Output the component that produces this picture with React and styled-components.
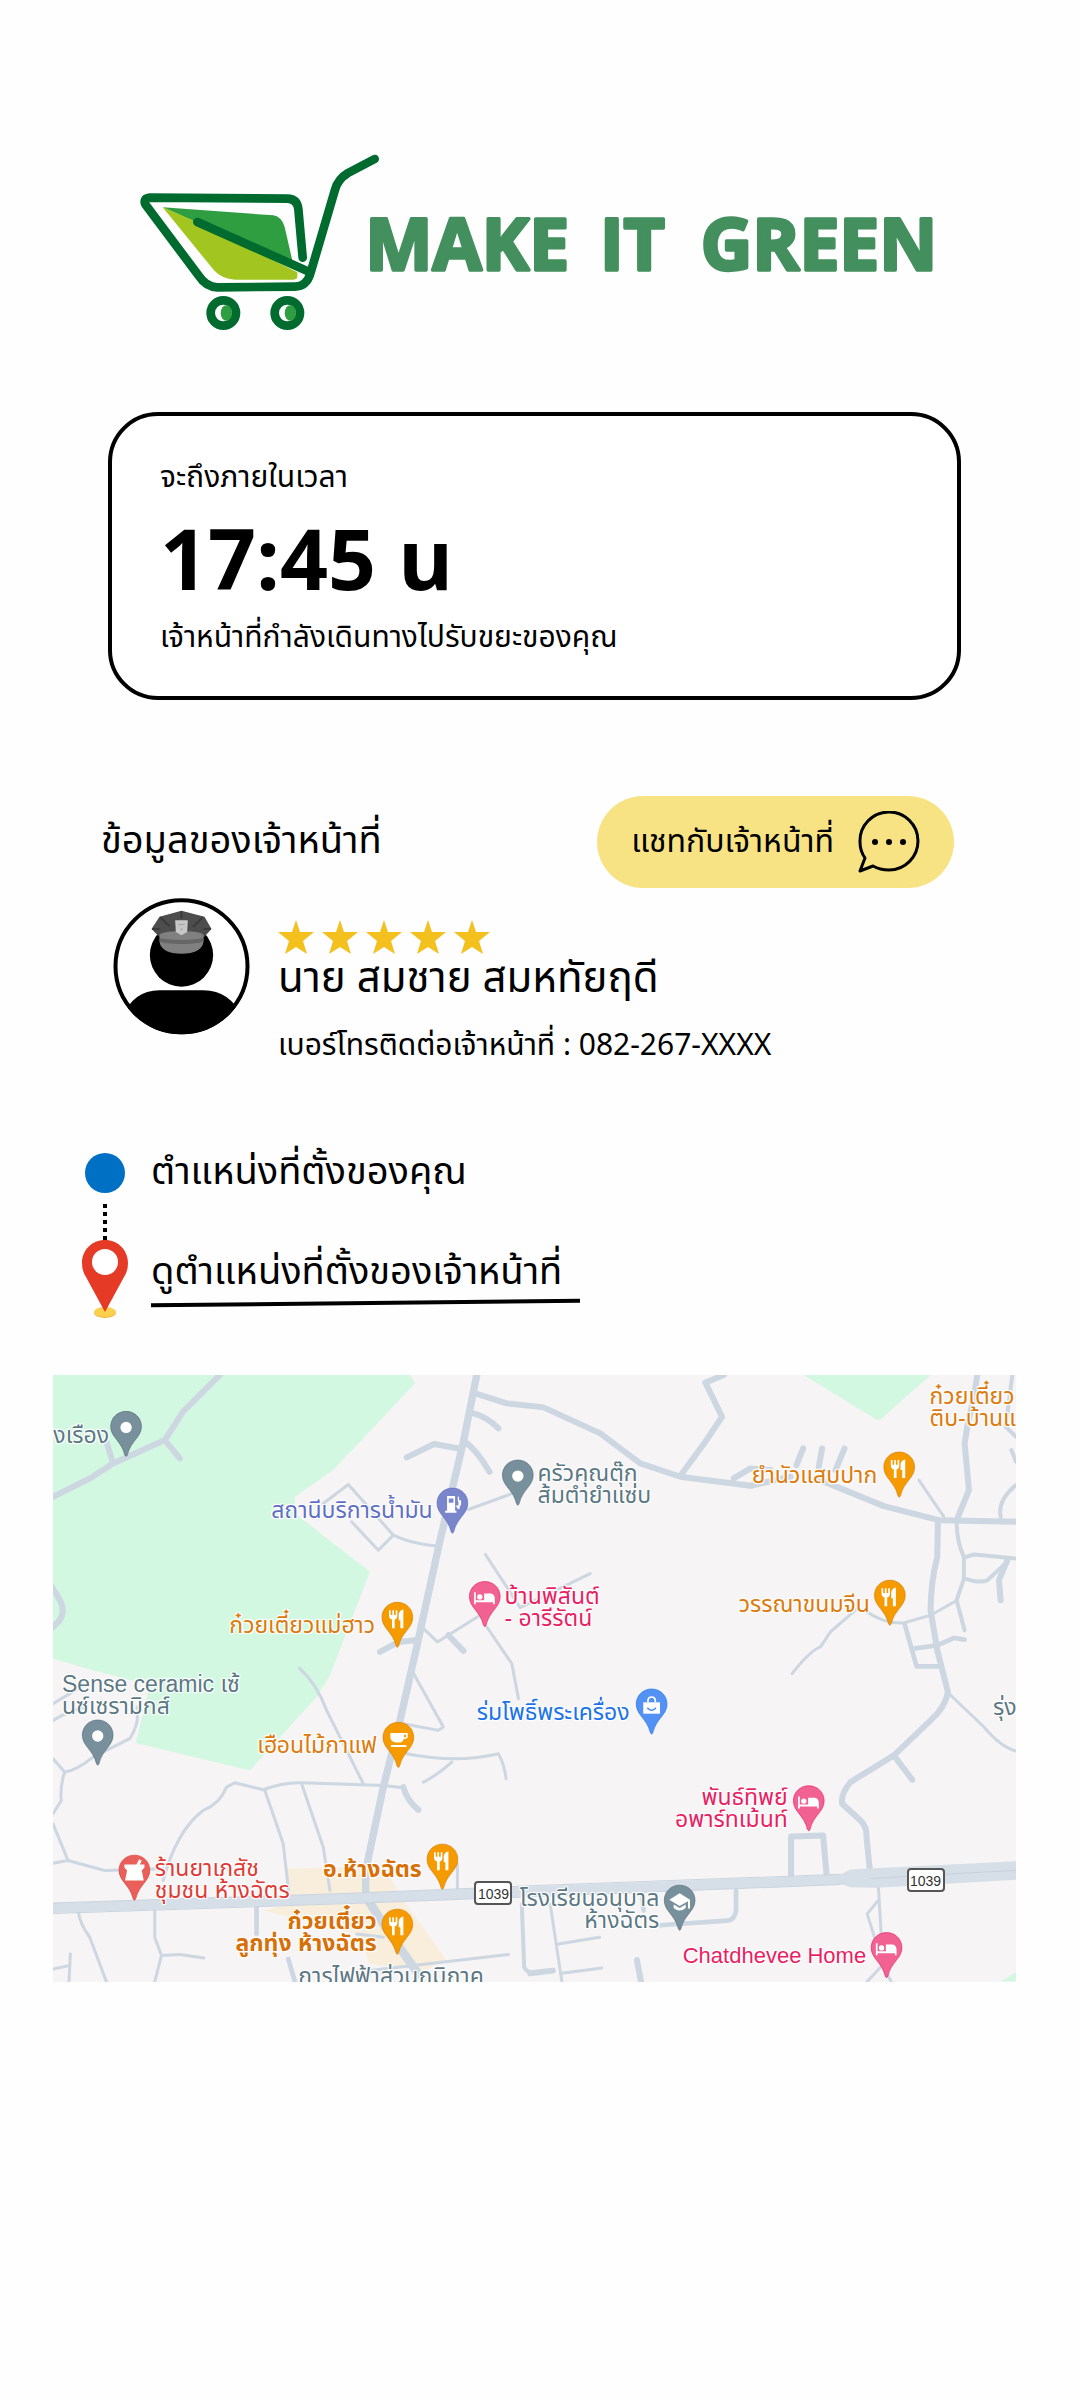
import React from "react";
import styled, { createGlobalStyle } from "styled-components";

const thai = `"Noto Sans Thai", "Open Sans", "Noto Sans", sans-serif`;

const GlobalStyle = createGlobalStyle`
  *, *::before, *::after { box-sizing: border-box; }
  body {
    margin: 0;
    background: #fefefe;
    color: #000;
    font-family: ${thai};
  }
  h1, h2, p, ul, ol { margin: 0; padding: 0; font-weight: 400; }
  ul, ol { list-style: none; }
`;

const Page = styled.main`
  display: flex;
  flex-direction: column;
  padding: 153px 64px 96px 53px;
`;

const Brand = styled.h1`
  display: flex;
  padding: 0 76px 0 87px;

  svg { display: block; width: 100%; max-width: 800px; height: auto; }
`;

const ArrivalCard = styled.section`
  display: flex;
  flex-direction: column;
  gap: 10px;
  margin: 79px 55px 0;
  padding: 42px 48px 38px;
  border: 4px solid #000;
  border-radius: 50px;
  background: #fff;
`;

const Note = styled.p`
  font-size: 30px;
  line-height: 40px;
`;

const ArrivalTime = styled.p`
  font-family: "Open Sans", sans-serif;
  font-size: 84px;
  line-height: 100px;
  font-weight: 700;
`;

const Officer = styled.section`
  display: flex;
  flex-direction: column;
  gap: 10px;
  margin-top: 96px;
  padding: 0 62px 0 48px;
`;

const OfficerHeader = styled.div`
  display: flex;
  align-items: center;
  justify-content: space-between;
`;

const SectionTitle = styled.h2`
  font-size: 38px;
  line-height: 60px;
`;

const ChatButton = styled.button`
  display: flex;
  align-items: center;
  gap: 24px;
  height: 92px;
  padding: 0 34px;
  border: 0;
  border-radius: 46px;
  background: #f8e384;
  color: #000;
  font-family: ${thai};
  font-size: 32px;
  line-height: 40px;
  cursor: pointer;
`;

const Profile = styled.div`
  display: flex;
  align-items: flex-start;
  gap: 28px;
  padding-left: 12px;
`;

const ProfileInfo = styled.div`
  display: flex;
  flex-direction: column;
  padding-top: 22px;
`;

const Stars = styled.div`
  display: flex;
  gap: 8px;
`;

const OfficerName = styled.p`
  font-size: 42px;
  line-height: 50px;
  margin-bottom: 22px;
`;

const Route = styled.ol`
  display: flex;
  flex-direction: column;
  margin-top: 74px;
  padding-left: 28px;
`;

const Stop = styled.li`
  display: flex;
  align-items: flex-start;
  gap: 22px;
  font-size: 38px;
  line-height: 56px;
`;

const StopName = styled.span`
  padding-top: 5px;
`;

const Marker = styled.span`
  display: flex;
  flex-direction: column;
  align-items: center;
  width: 48px;
`;

const Dot = styled.span`
  width: 40px;
  height: 40px;
  margin-top: 13px;
  border-radius: 50%;
  background: #0070c4;
`;

const Connector = styled.span`
  width: 4px;
  height: 36px;
  margin-top: 11px;
  background: repeating-linear-gradient(#000 0 4px, transparent 4px 8px);
`;

const StopLink = styled.a`
  display: block;
  padding-right: 18px;
  color: #000;
  text-decoration: none;
  position: relative;

  &::after {
    content: "";
    position: absolute;
    left: 0;
    right: 0;
    bottom: -4px;
    height: 4px;
    background: #000;
    transform: rotate(-0.6deg);
  }
`;

const MapFrame = styled.section`
  position: relative;
  overflow: hidden;
  margin-top: 57px;
  aspect-ratio: 962 / 606;
  background: #f6f4f5;
`;

const MapArt = styled.svg`
  display: block;
  width: 100%;
  height: 100%;
`;

const MapLabel = styled.span`
  position: absolute;
  left: ${(p) => p.$x}%;
  top: ${(p) => p.$y}%;
  transform: translate(${(p) => (p.$end ? "-100%" : "0")}, -50%);
  text-align: ${(p) => (p.$end ? "right" : "left")};
  white-space: pre;
  font-family: "Liberation Sans", "Noto Sans Thai", sans-serif;
  font-size: ${(p) => (p.$latin ? 22 : 23)}px;
  line-height: 22px;
  font-weight: ${(p) => (p.$bold ? 700 : 400)};
  color: ${(p) => p.$color};
  text-shadow: 0 0 2px #fff, 1px 1px 1px #fff, -1px -1px 1px #fff, 1px -1px 1px #fff, -1px 1px 1px #fff;
`;

const RoadShield = styled.span`
  position: absolute;
  left: ${(p) => p.$x}%;
  top: ${(p) => p.$y}%;
  transform: translate(-50%, -50%);
  width: 38px;
  height: 24px;
  border: 2px solid #555;
  border-radius: 4px;
  background: #fff;
  color: #333;
  font-family: "Liberation Sans", sans-serif;
  font-size: 14px;
  line-height: 22px;
  text-align: center;
`;

function Logo() {
  return (
    <svg viewBox="60 40 2400 540" role="img" aria-label="MAKE IT GREEN">
      <path d="M128 203 L460 227 Q486 232 494 262 L521 380 L230 248 Z" fill="#2f9e41" />
      <path d="M128 203 L232 248 L532 398 V410 Q532 420 520 420 H345 Q305 418 282 392 Z" fill="#a2c61f" />
      <g fill="none" stroke="#006b2f" strokeWidth="26" strokeLinecap="round" strokeLinejoin="round">
        <path d="M548 354 L535 208 Q532 178 502 177 L90 174 Q68 176 76 194 L236 408 Q258 442 292 443 L525 441 Q560 440 571 402 L645 150 Q654 118 684 100 L764 58" />
        <path d="M232 247 L566 396" />
        <circle cx="310" cy="520" r="38" />
        <circle cx="502" cy="520" r="38" />
      </g>
      <ellipse cx="319" cy="520" rx="17" ry="23" fill="#2f9e41" />
      <ellipse cx="511" cy="520" rx="17" ry="23" fill="#2f9e41" />
      <g
        fontFamily="Open Sans, sans-serif"
        fontWeight="700"
        fontSize="214"
        fill="#438f5e"
        stroke="#438f5e"
        strokeWidth="10"
        strokeLinejoin="round"
      >
        <text x="736" y="390">MAKE</text>
        <text x="1440" y="390">IT</text>
        <text x="1742" y="390">GREEN</text>
      </g>
    </svg>
  );
}

function Avatar() {
  return (
    <svg width="137" height="137" viewBox="41 37 410 411" role="img" aria-label="เจ้าหน้าที่">
      <defs>
        <clipPath id="face"><circle cx="246" cy="242" r="204" /></clipPath>
      </defs>
      <circle cx="246" cy="242" r="198" fill="#fff" stroke="#000" strokeWidth="12" />
      <g clipPath="url(#face)">
        <path d="M60 420 Q90 314 180 314 H312 Q402 314 440 420 V460 H60 Z" />
      </g>
      <circle cx="246" cy="208" r="95" />
      <path d="M246 75 L315 93 L336 130 L314 154 Q246 170 180 154 L156 130 L180 93 Z" fill="#4d4d4d" />
      <path d="M246 77 V98 M182 95 L210 122 M310 95 L280 124 M158 130 H180 M334 130 H312" stroke="#3a3a3a" strokeWidth="6" />
      <path d="M180 148 Q184 138 246 136 Q308 138 312 148 V168 Q306 204 246 204 Q186 204 180 168 Z" fill="#808080" />
      <path d="M180 158 Q246 168 312 158 V166 Q306 174 246 175 Q186 174 180 166 Z" fill="#666" />
      <path d="M227 104 H265 L263 139 L246 149 L229 139 Z" fill="#c8c8c8" />
      <path d="M236 114 H256 V119 H236 Z M243 126 H249 V134 H243 Z" fill="#aaa" />
    </svg>
  );
}

function ChatIcon() {
  return (
    <svg width="62" height="62" viewBox="0 0 62 62" fill="none" stroke="#000" strokeWidth="3" strokeLinejoin="round" aria-hidden="true">
      <path d="M7 47 Q2 40 2 31 A29 29 0 1 1 31 59 Q22 59 15 55 L2 60 Z" />
      <g fill="#000" stroke="none">
        <circle cx="17" cy="31" r="3" />
        <circle cx="31" cy="31" r="3" />
        <circle cx="45" cy="31" r="3" />
      </g>
    </svg>
  );
}

function Star() {
  return (
    <svg width="36" height="34" viewBox="0 0 36 34" aria-hidden="true">
      <path d="M18 0 L22 12 L36 12 L25 21 L29 34 L18 27 L7 34 L11 21 L0 12 L14 12 Z" fill="#f4c01e" />
    </svg>
  );
}

function LocationPin() {
  return (
    <svg width="46" height="78" viewBox="0 0 46 78" aria-hidden="true">
      <ellipse cx="23" cy="73" rx="11" ry="5" fill="#f4b63f" />
      <ellipse cx="23" cy="72" rx="11" ry="5" fill="#fcd04f" />
      <path d="M23 0 C36 0 46 10 46 23 Q46 31 42 37 L23 72 L4 37 Q0 31 0 23 C0 10 10 0 23 0 Z" fill="#e43a26" />
      <circle cx="23" cy="22" r="13" fill="#fff" />
    </svg>
  );
}

const glyphs = {
  dot: <circle r="17" />,
  food: <path d="M-25 -24 H-20 V-10 H-15 V-24 H-10 V-10 H-5 V-24 H0 V-8 Q0 2 -8 4 V30 H-16 V4 Q-25 2 -25 -8 Z M18 -26 V30 H9 V6 H4 V-12 Q6 -24 18 -26 Z" />,
  bed: <path d="M-32 -16 H-27 V8 H-2 V-12 H18 Q30 -10 30 4 V20 H25 V14 H-27 V20 H-32 Z M-23 -2 A8 8 0 1 0 -7 -2 A8 8 0 1 0 -23 -2" />,
  fuel: <path fillRule="evenodd" d="M-16 -24 H8 V20 H12 V26 H-22 V20 H-16 Z M-11 -17 V-4 H3 V-17 Z M16 -22 H20 V-12 H26 V2 L22 6 V14 H14 V8 H10 V4 H18 V-8 H16 Z" />,
  cafe: <path fillRule="evenodd" d="M-24 -16 H28 V-2 Q24 2 16 2 Q14 12 4 12 H-8 Q-24 10 -24 -4 Z M17 -11 V-3 H23 V-11 Z M-22 20 H24 V26 H-22 Z" />,
  pharmacy: <path d="M-30 -20 H6 L14 -36 L22 -31 L16 -20 H30 V-11 L22 -2 L28 28 H-28 L-22 -2 L-30 -11 Z" />,
  bag: (
    <>
      <path d="M-25 -8 H25 V26 H-25 Z" />
      <path d="M-11 -8 V-14 Q-10 -24 0 -24 Q10 -24 11 -14 V-8" fill="none" stroke="#fff" strokeWidth="5" />
      <path d="M-13 8 Q0 24 13 8" fill="none" stroke="#5491f5" strokeWidth="5" />
    </>
  ),
  school: <path d="M-31 -4 L0 -24 L31 -4 V22 H25 V0 L0 14 Z M-18 10 L0 20 L18 10 V20 Q0 36 -18 20 Z" />,
};

const colors = {
  slate: ["#78909c", "#546e7a"],
  orange: ["#f59b00", "#d97900"],
  pink: ["#f16292", "#e91e63"],
  indigo: ["#7986cb", "#5c6bc0"],
  red: ["#ea5f5a", "#d93a35"],
  blue: ["#5491f5", "#1a73e8"],
};

const pins = [
  [229, 260, "slate", "dot"],
  [1403, 406, "slate", "dot"],
  [1207, 490, "indigo", "fuel"],
  [1042, 832, "orange", "food"],
  [1304, 770, "pink", "bed"],
  [2546, 382, "orange", "food"],
  [2518, 766, "orange", "food"],
  [144, 1185, "slate", "dot"],
  [1045, 1192, "orange", "cafe"],
  [254, 1590, "red", "pharmacy"],
  [1177, 1557, "orange", "food"],
  [1042, 1752, "orange", "food"],
  [1804, 1092, "blue", "bag"],
  [2275, 1382, "pink", "bed"],
  [1888, 1680, "slate", "school"],
  [2508, 1822, "pink", "bed"],
];

const labels = [
  { x: 11, y: 195, tone: "#5c7884", text: "งเรือง" },
  { x: 1148, y: 420, end: true, tone: "#5f6fc4", text: "สถานีบริการน้ำมัน" },
  { x: 975, y: 765, end: true, tone: "#dd7a0c", text: "ก๋วยเตี๋ยวแม่ฮาว" },
  { x: 1462, y: 343, tone: "#5c7884", text: "ครัวคุณตุ๊ก\nส้มตำยำแซ่บ" },
  { x: 1363, y: 710, tone: "#e91e63", text: "บ้านพิสันต์\n- อารีรัตน์" },
  { x: 2480, y: 315, end: true, tone: "#dd7a0c", text: "ยำนัวแสบปาก" },
  { x: 2458, y: 700, end: true, tone: "#dd7a0c", text: "วรรณาขนมจีน" },
  { x: 2637, y: 110, tone: "#dd7a0c", text: "ก๋วยเตี๋ยว\nติบ-บ้านแ" },
  { x: 37, y: 975, tone: "#5c7884", text: "Sense ceramic เซ้\nนซ์เซรามิกส์" },
  { x: 980, y: 1125, end: true, tone: "#dd7a0c", text: "เฮือนไม้กาแฟ" },
  { x: 315, y: 1525, tone: "#df3a35", text: "ร้านยาเภสัช\nชุมชน ห้างฉัตร" },
  { x: 1115, y: 1495, end: true, bold: true, tone: "#d77008", text: "อ.ห้างฉัตร" },
  { x: 980, y: 1685, end: true, bold: true, tone: "#d77008", text: "ก๋วยเตี๋ยว\nลูกทุ่ง ห้างฉัตร" },
  { x: 745, y: 1815, tone: "#5c7884", text: "การไฟฟ้าส่วนภูมิภาค" },
  { x: 1738, y: 1025, end: true, tone: "#1a73e8", text: "ร่มโพธิ์พระเครื่อง" },
  { x: 2827, y: 1010, tone: "#5c7884", text: "รุ่ง" },
  { x: 2212, y: 1312, end: true, tone: "#e91e63", text: "พันธ์ทิพย์\nอพาร์ทเม้นท์" },
  { x: 1827, y: 1615, end: true, tone: "#5c7884", text: "โรงเรียนอนุบาล\nห้างฉัตร" },
  { x: 2447, y: 1757, end: true, latin: true, tone: "#e91e63", text: "Chatdhevee Home" },
];

const toX = (x) => ((x - 10) / 2886) * 100;
const toY = (y) => ((y - 15) / 1818) * 100;

function Streets() {
  return (
    <MapArt viewBox="10 15 2886 1818" preserveAspectRatio="none" aria-hidden="true">
      <g fill="#d3f8e2">
        <path d="M10 15 H1080 L1095 40 L850 300 L735 380 V430 L960 605 L840 915 L800 980 L600 1200 L258 1118 L300 945 L130 900 L10 865 Z" />
        <path d="M2260 15 H2640 L2490 148 L2480 150 Z" />
        <path d="M2850 1833 L2896 1805 V1833 Z" />
      </g>
      <path d="M710 1495 L1000 1488 L1060 1590 L1190 1770 L1120 1800 L960 1780 L920 1690 L640 1620 L720 1600 Z" fill="#f8eedb" />
      <g fill="none" stroke="#ccd7e1" strokeLinecap="round" strokeLinejoin="round">
        <g strokeWidth="9">
          <path d="M820 400 L895 343 L1030 495 L985 540 L905 455 M1030 495 Q1080 520 1155 527" />
          <path d="M1255 418 L1400 365" />
          <path d="M1306 553 L1410 712 L1620 610" />
          <path d="M1115 770 L1162 815 L1290 735 M1310 770 L1385 880 L1405 985" />
          <path d="M748 893 Q800 940 830 1020 L940 1240" />
          <path d="M1085 900 L1180 1070 L1165 1080 L1060 1060" />
          <path d="M1070 1150 Q1220 1180 1345 1150 Q1362 1180 1368 1225 M1205 1175 Q1160 1215 1120 1235" />
          <path d="M340 1530 Q380 1380 460 1320 Q510 1300 530 1250 L555 1237 L640 1258 Q700 1235 755 1237 L1000 1245 L1060 1252" />
          <path d="M755 1240 L820 1430 L840 1560 M645 1260 L700 1420 L716 1560" />
          <path d="M10 1165 L45 1205 Q30 1250 35 1290 L10 1330 M10 1360 L55 1470 L10 1478 M55 1470 L165 1500 L340 1495" />
          <path d="M45 1205 Q80 1200 130 1160 L240 1105 Q270 1060 262 1010 M10 1000 Q60 970 110 940 M10 1050 Q60 1020 110 1010" />
          <path d="M85 1620 Q90 1660 120 1700 L170 1833 M315 1610 V1700 L335 1755 L315 1833 M335 1755 L390 1752 L462 1762" />
          <path d="M62 1750 L58 1833 M10 1795 L58 1785" />
          <path d="M1222 1480 V1560" />
          <path d="M920 1690 L1000 1700 M960 1800 L1375 1752" />
          <path d="M1415 1600 L1422 1790 Q1430 1810 1470 1806" strokeWidth="12" />
          <path d="M1500 1600 L1535 1833 M1525 1720 L1648 1700 M1535 1808 L1655 1792" />
          <path d="M2225 910 Q2280 840 2310 830 L2340 785 L2420 715 M2450 725 Q2500 760 2560 758 L2640 735 L2720 690" />
          <path d="M2605 330 L2680 440" />
          <path d="M2718 460 Q2720 520 2740 560 V625 L2718 690 L2742 780" strokeWidth="12" />
          <path d="M2740 562 L2770 553 L2896 565 M2742 625 Q2790 640 2810 630 L2870 575" strokeWidth="12" />
          <path d="M2562 760 L2598 888 H2665 M2590 835 L2660 825 L2710 803 L2742 808" strokeWidth="14" />
          <path d="M2896 345 Q2840 390 2850 440 M2882 240 L2896 275 M2885 15 L2865 170 L2896 200" strokeWidth="12" />
          <path d="M2690 965 L2800 1070 Q2850 1130 2896 1142" />
          <path d="M2483 1540 L2492 1690 M2483 1590 L2450 1630 L2472 1700 M2490 1790 L2450 1833 M2510 1810 L2522 1833" />
        </g>
        <g strokeWidth="18">
          <path d="M510 15 L400 125 L345 210 L190 280 L120 325 L10 380 M190 280 L170 215 M345 210 L390 265" />
          <path d="M0 640 L25 680 Q50 720 30 750 L5 775" />
          <path d="M1070 262 L1152 222 L1235 237 M1270 130 Q1310 140 1345 175" />
          <path d="M1245 215 Q1280 240 1318 305" />
          <path d="M990 845 L1045 815 L1095 810 M1195 795 L1240 842" />
          <path d="M1275 70 L1370 100 L1480 112 L1650 190 L1770 280 L1890 320 L2100 347 L2220 320" />
          <path d="M2310 330 L2500 408 L2665 450 L2896 455" />
          <path d="M1895 310 L1965 215 L2015 140 L1965 38 L2020 15 M2050 325 L2100 295 L2160 300" />
          <path d="M2258 235 L2238 285 M2315 235 L2305 290 M2382 235 L2355 300" />
          <path d="M2780 15 L2770 80 L2750 170 L2742 220 L2755 360 L2722 440" />
          <path d="M2662 450 L2660 560 Q2640 640 2640 720 L2660 840 L2692 965 Q2685 1010 2640 1050 L2530 1155 L2400 1235 Q2370 1270 2375 1300 L2430 1350 Q2450 1370 2448 1400 L2458 1500" />
          <path d="M2870 570 L2845 630 L2850 690 M2530 1155 L2585 1228" />
          <path d="M2222 1515 V1398 L2318 1395 L2328 1510" />
          <path d="M2057 1560 V1620 Q2052 1650 2030 1650 L1830 1664 M1775 1580 L1780 1620" strokeWidth="14" />
          <path d="M620 1600 V1690 M715 1765 L735 1833" strokeWidth="14" />
          <path d="M1060 1250 Q1070 1290 1105 1318" />
          <path d="M1440 1808 L1508 1800 M1760 1768 L1772 1833" />
        </g>
        <path d="M1280 15 L1240 215 L1170 510 L1100 830 L1050 1050 L1000 1250 L947 1500 V1570" strokeWidth="22" />
        <path d="M955 1590 L1020 1690 L1105 1810" strokeWidth="26" />
      </g>
      <path d="M0 1613 L900 1583 L1440 1563 L2380 1527 L2900 1502" fill="none" stroke="#d6dee7" strokeWidth="30" />
      <path d="M2370 1512 L2400 1497 L2896 1472 V1528 L2480 1552 L2400 1550 L2370 1540 Z" fill="#d6dee7" />
      <path d="M2460 1524 L2896 1499" stroke="#c6d1dc" strokeWidth="3" />
      <path d="M0 1598 L900 1568 L1440 1546 L2370 1511 M0 1629 L900 1599 L1440 1579 L2370 1542" fill="none" stroke="#c9d4df" strokeWidth="3" />
      {pins.map(([x, y, tone, glyph]) => (
        <g key={`${x}-${y}`} transform={`translate(${x} ${y - 88})`}>
          <path
            d="M0 -48 C26 -48 46 -28 46 -3 C46 30 14 40 4 82 Q0 92 -4 82 C-14 40 -46 30 -46 -3 C-46 -28 -26 -48 0 -48 Z"
            fill={colors[tone][0]}
            stroke={colors[tone][1]}
            strokeWidth="2"
          />
          <g fill="#fff">{glyphs[glyph]}</g>
        </g>
      ))}
    </MapArt>
  );
}

export default function App() {
  return (
    <>
      <GlobalStyle />
      <Page>
        <Brand><Logo /></Brand>

        <ArrivalCard>
          <Note>จะถึงภายในเวลา</Note>
          <ArrivalTime>17:45 u</ArrivalTime>
          <Note>เจ้าหน้าที่กำลังเดินทางไปรับขยะของคุณ</Note>
        </ArrivalCard>

        <Officer>
          <OfficerHeader>
            <SectionTitle>ข้อมูลของเจ้าหน้าที่</SectionTitle>
            <ChatButton type="button">
              แชทกับเจ้าหน้าที่
              <ChatIcon />
            </ChatButton>
          </OfficerHeader>
          <Profile>
            <Avatar />
            <ProfileInfo>
              <Stars role="img" aria-label="5/5">
                {[1, 2, 3, 4, 5].map((n) => <Star key={n} />)}
              </Stars>
              <OfficerName>นาย สมชาย สมหทัยฤดี</OfficerName>
              <Note>เบอร์โทรติดต่อเจ้าหน้าที่ : 082-267-XXXX</Note>
            </ProfileInfo>
          </Profile>
        </Officer>

        <Route>
          <Stop>
            <Marker><Dot /><Connector /></Marker>
            <StopName>ตำแหน่งที่ตั้งของคุณ</StopName>
          </Stop>
          <Stop>
            <Marker><LocationPin /></Marker>
            <StopName>
              <StopLink href="#map">ดูตำแหน่งที่ตั้งของเจ้าหน้าที่</StopLink>
            </StopName>
          </Stop>
        </Route>

        <MapFrame id="map">
          <Streets />
          {labels.map((l) => (
            <MapLabel
              key={l.text}
              $x={toX(l.x)}
              $y={toY(l.y)}
              $end={l.end}
              $bold={l.bold}
              $latin={l.latin}
              $color={l.tone}
            >
              {l.text}
            </MapLabel>
          ))}
          <RoadShield $x={toX(1330)} $y={toY(1567)}>1039</RoadShield>
          <RoadShield $x={toX(2625)} $y={toY(1527)}>1039</RoadShield>
        </MapFrame>
      </Page>
    </>
  );
}
